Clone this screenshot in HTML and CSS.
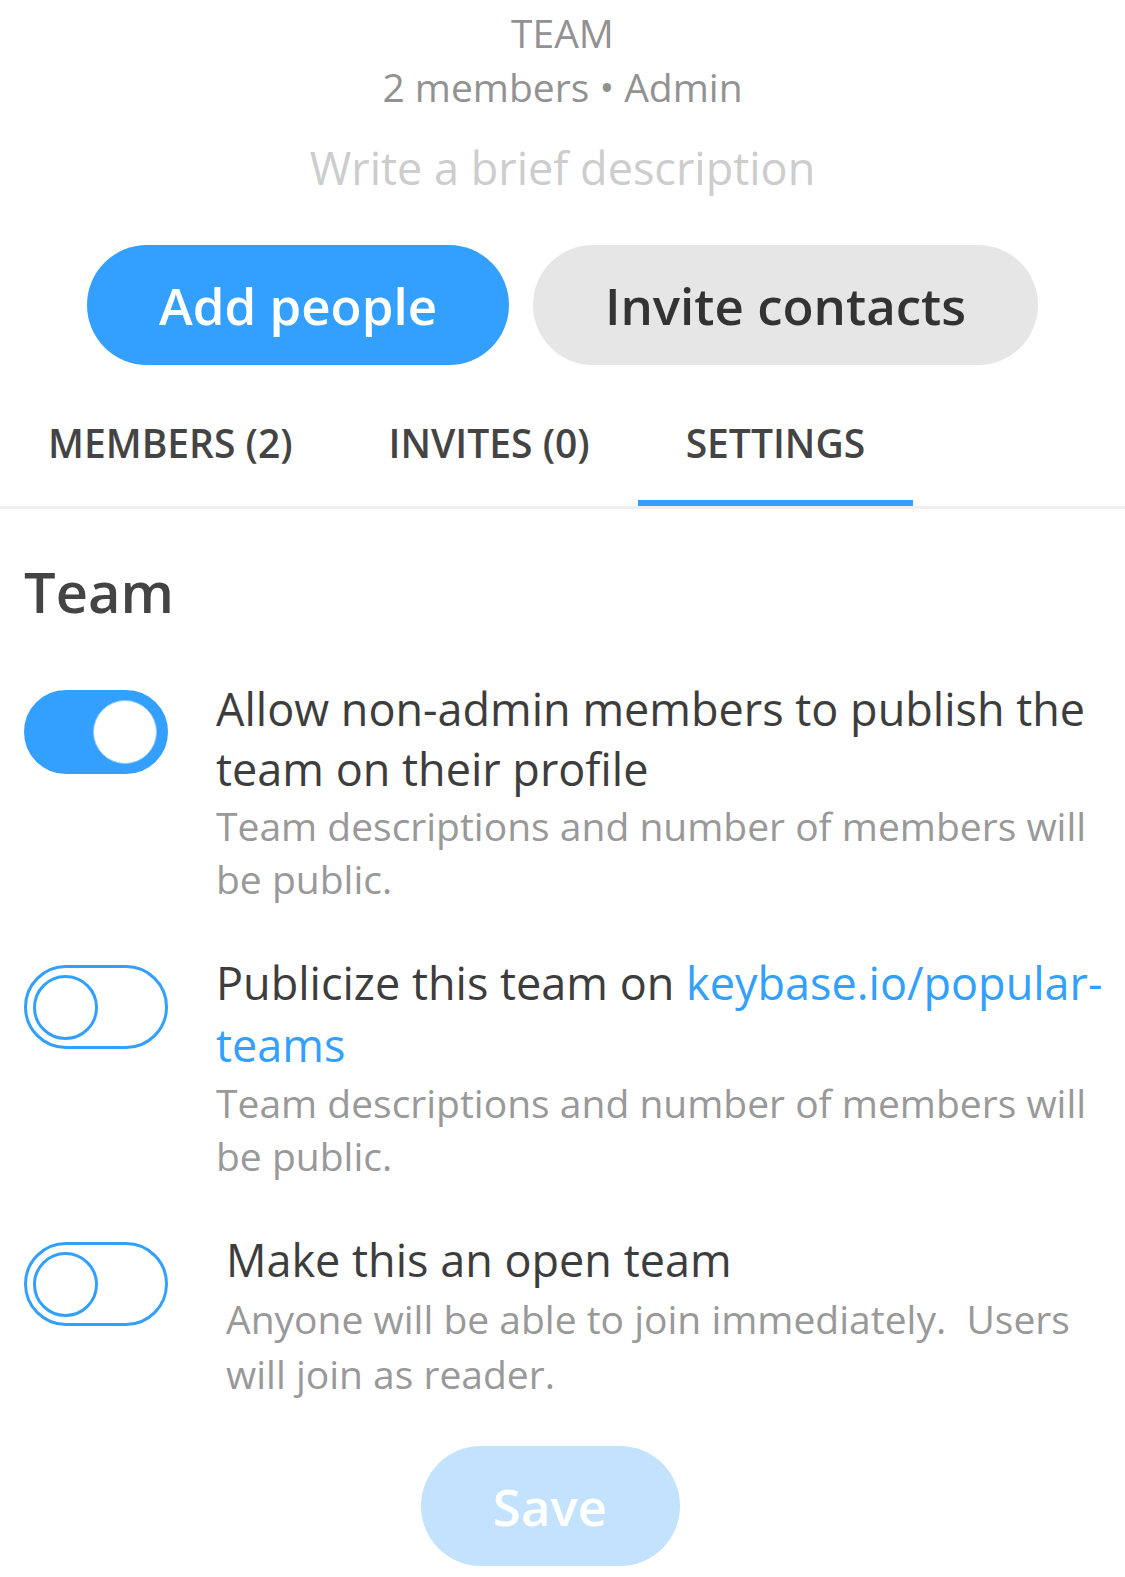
FILE: index.html
```html
<!DOCTYPE html>
<html lang="en">
<head>
    <meta charset="UTF-8">
    <title>Team settings</title>
    <link rel="stylesheet" href="styles.css">
</head>
<body>
    <div class="head">
        <div class="head-kind">TEAM</div>
        <div class="head-meta">2 members &bull; Admin</div>
        <div class="head-desc">Write a brief description</div>
    </div>

    <div class="actions">
        <span class="btn btn-primary">Add people</span>
        <span class="btn btn-secondary">Invite contacts</span>
    </div>

    <div class="tabs">
        <span class="tab">MEMBERS (2)</span>
        <span class="tab">INVITES (0)</span>
        <span class="tab tab-active">SETTINGS</span>
    </div>

    <div class="settings">
        <h2>Team</h2>

        <div class="row row-first">
            <div class="switch switch-on"><span class="knob"></span></div>
            <div class="row-text">
                <div class="row-title">Allow non-admin members to publish the team on their profile</div>
                <div class="row-sub">Team descriptions and number of members will be public.</div>
            </div>
        </div>

        <div class="row row-second">
            <div class="switch"><span class="knob"></span></div>
            <div class="row-text">
                <div class="row-title">Publicize this team on <span class="link">keybase.io/popular-teams</span></div>
                <div class="row-sub">Team descriptions and number of members will be public.</div>
            </div>
        </div>

        <div class="row row-third">
            <div class="switch"><span class="knob"></span></div>
            <div class="row-text">
                <div class="row-title">Make this an open team</div>
                <div class="row-sub">Anyone will be able to join immediately.&nbsp; Users will join as reader.</div>
            </div>
        </div>

        <div class="save-wrap">
            <span class="btn btn-save">Save</span>
        </div>
    </div>
</body>
</html>
```

FILE: styles.css
```css
*{
    margin: 0;
    padding: 0;
    box-sizing: border-box;
}
body{
    width: 1125px;
    background: #fff;
    font-family: "Open Sans", "Noto Sans", sans-serif;
    color: #3d3d3d;
}
.head{
    text-align: center;
    padding-top: 6px;
}
.head-kind{
    font-size: 39px;
    line-height: 54px;
    color: #929292;
}
.head-meta{
    font-size: 39px;
    line-height: 54px;
    color: #929292;
}
.head-desc{
    font-size: 45px;
    line-height: 54px;
    color: #cdcdcd;
    margin-top: 27px;
}
.actions{
    display: flex;
    justify-content: center;
    gap: 24px;
    margin-top: 50px;
}
.btn{
    display: flex;
    align-items: center;
    justify-content: center;
    height: 120px;
    border-radius: 60px;
    font-size: 51px;
    font-weight: 600;
}
.btn-primary{
    width: 422px;
    background: #33a0ff;
    color: #fff;
}
.btn-secondary{
    width: 505px;
    background: #e6e6e6;
    color: #333;
}
.tabs{
    display: flex;
    margin-top: 19px;
    border-bottom: 3px solid #f0f0f0;
}
.tab{
    padding: 32px 48px 33px;
    font-size: 39px;
    line-height: 54px;
    font-weight: 600;
    color: #444;
    border-bottom: 6px solid transparent;
    margin-bottom: -3px;
}
.tabs .tab-active{
    border-bottom-color: #33a0ff;
    padding-bottom: 30px;
    margin-bottom: 0;
}
.settings{
    padding: 0 12px 0 24px;
}
.settings h2{
    font-size: 56px;
    line-height: 70px;
    font-weight: 600;
    color: #444;
    margin-top: 47px;
}
.row{
    display: flex;
    align-items: flex-start;
}
.row-first{
    margin-top: 51px;
}
.row-second{
    margin-top: 47px;
}
.row-third{
    margin-top: 47px;
}
.switch{
    flex: none;
    width: 144px;
    height: 84px;
    border-radius: 42px;
    border: 3px solid #33a0ff;
    background: #fff;
    display: flex;
    align-items: center;
    padding: 0 6px;
    margin-top: 13px;
}
.switch .knob{
    width: 65px;
    height: 65px;
    border-radius: 50%;
    border: 3px solid #33a0ff;
    background: #fff;
}
.switch-on{
    background: #33a0ff;
    justify-content: flex-end;
    padding: 0 8px;
}
.switch-on .knob{
    width: 64px;
    height: 64px;
    border: 1px solid #8ccaff;
}
.row-text{
    flex: 1;
    padding-left: 48px;
}
.row-first .row-text{
    padding-top: 2px;
}
.row-third .row-text{
    padding-left: 58px;
}
.row-title{
    font-size: 45px;
    line-height: 60px;
    color: #3d3d3d;
}
.row-second .row-title{
    line-height: 62px;
}
.row-third .row-title{
    line-height: 62px;
}
.row-sub{
    font-size: 39px;
    line-height: 53px;
    color: #999;
}
.row-third .row-sub{
    line-height: 55px;
}
.link{
    color: #33a0ff;
}
.save-wrap{
    display: flex;
    justify-content: center;
    padding-right: 37px;
    margin-top: 45px;
}
.btn-save{
    width: 259px;
    background: #c2e2fd;
    color: #fff;
}
```
